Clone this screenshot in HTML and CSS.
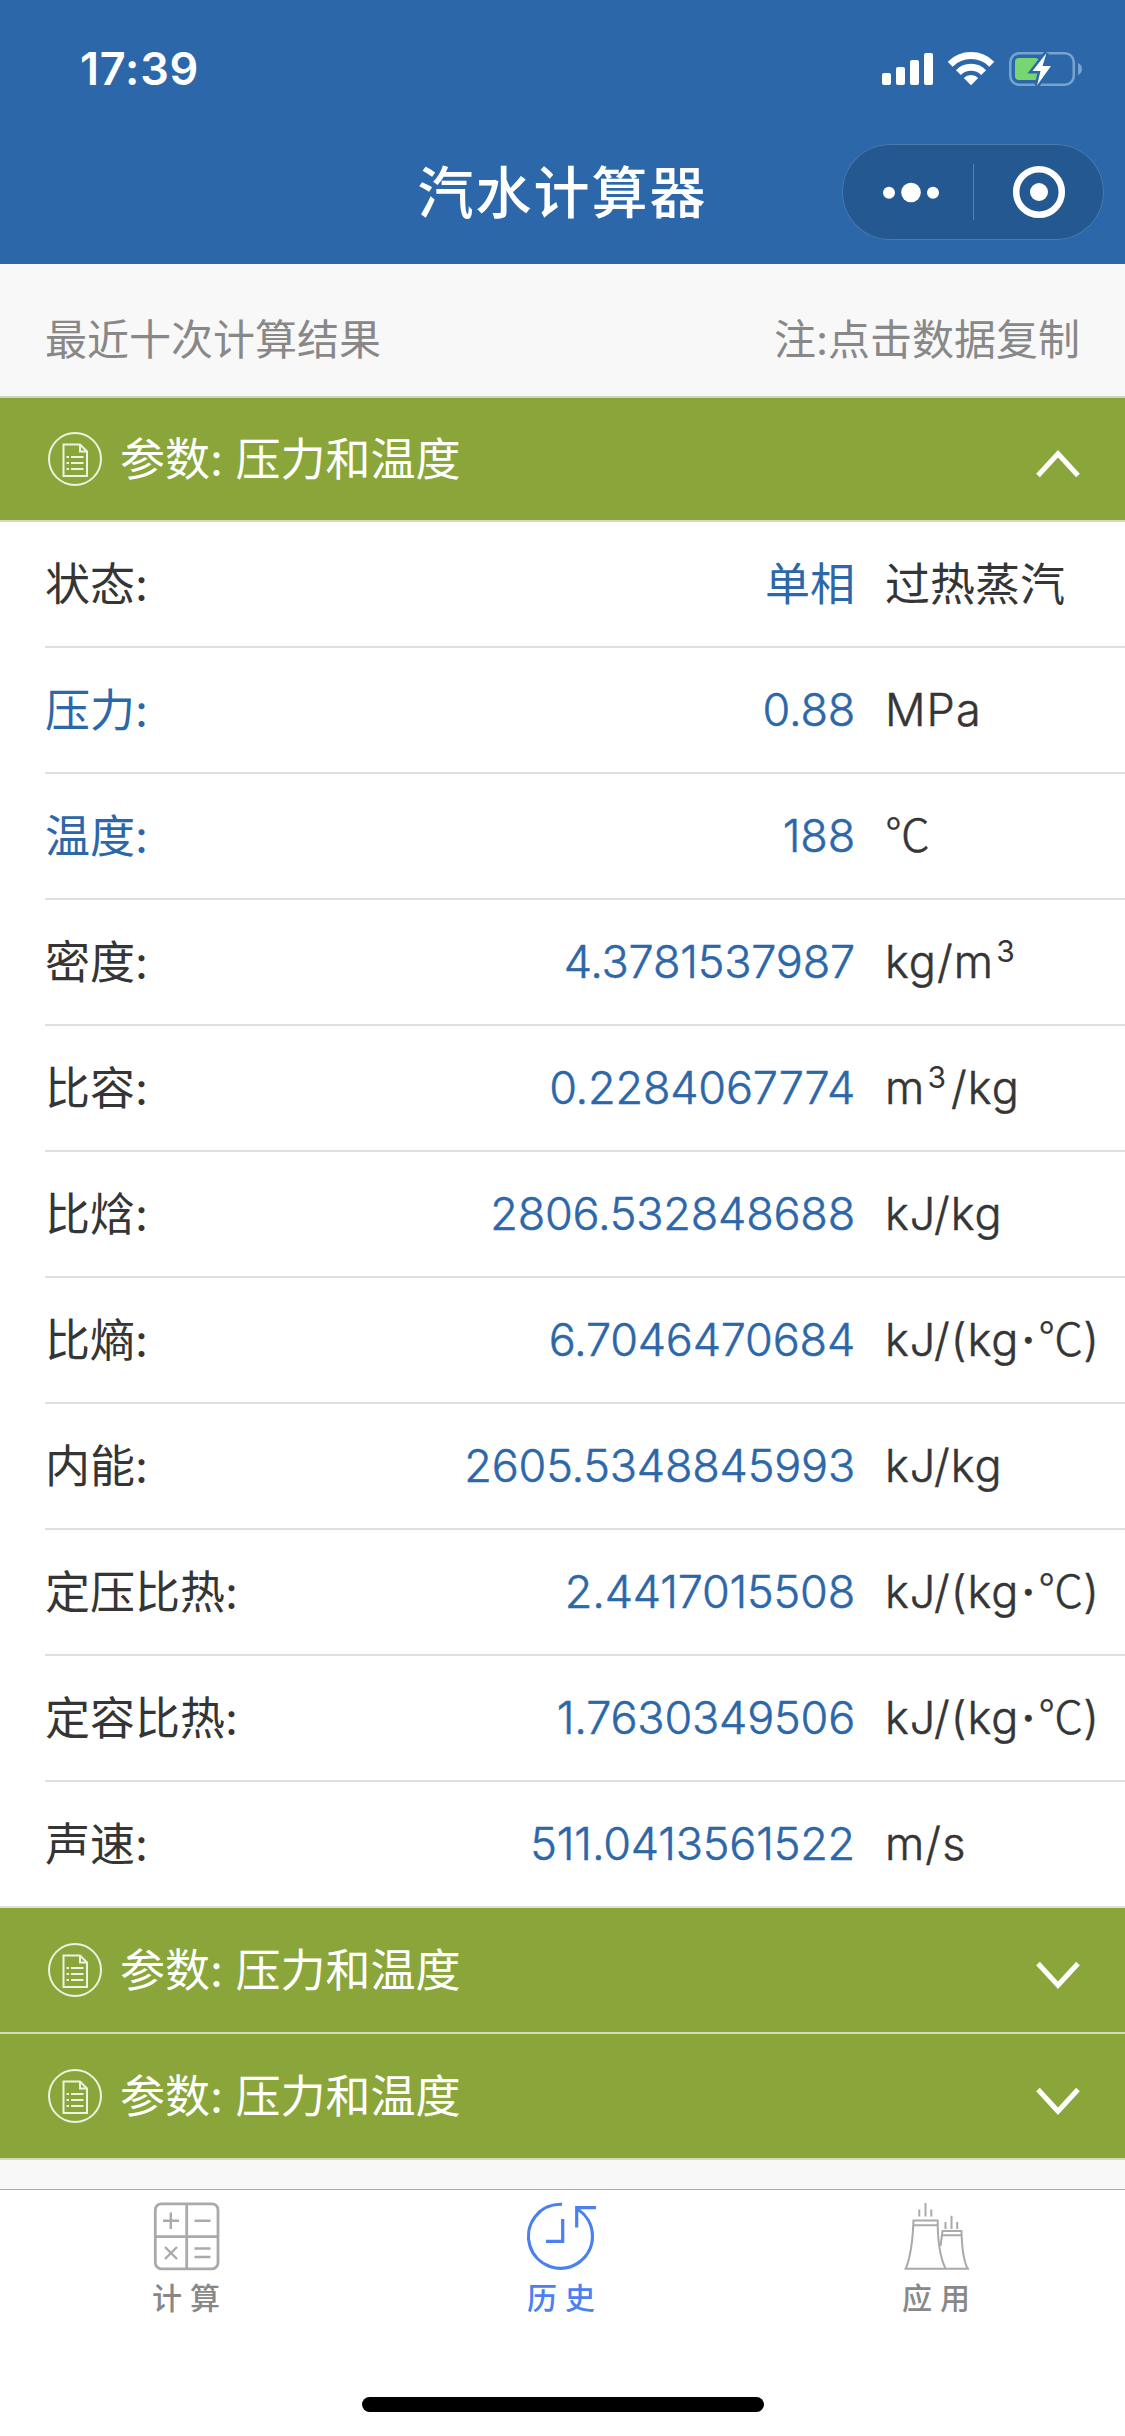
FILE: index.html
```html
<!DOCTYPE html>
<html lang="zh-CN">
<head>
    <meta charset="UTF-8">
    <meta name="viewport" content="width=device-width, initial-scale=1.0">
    <title>汽水计算器</title>
    <link rel="stylesheet" href="styles.css">
</head>
<body>
    <!-- shared icons -->
    <svg class="defs" width="0" height="0">
        <symbol id="doc" viewBox="48 1943 54 54">
            <circle cx="75" cy="1970" r="26" />
            <path d="M63.5 1955.500H80l7 7V1987H63.500Z M80 1955.500V1962.500H87" />
            <path d="M66.500 1968h2.500M66.500 1974h2.500M66.500 1980h2.500M71 1968h12.500M71 1974h12.500M71 1980h12.500" />
        </symbol>
        <symbol id="up" viewBox="0 0 44 28">
            <path d="M2 25.500L22 3.700L42 25.500" />
        </symbol>
        <symbol id="down" viewBox="0 0 44 28">
            <path d="M2 2.500L22 24.300L42 2.500" />
        </symbol>
    </svg>

    <header>
        <div class="status-bar">
            <span class="time">17:39</span>
            <svg class="status-icons" width="205" height="40" viewBox="880 50 205 40">
                <g fill="#fff">
                    <rect x="882" y="73" width="9" height="12" rx="2" />
                    <rect x="896" y="67" width="9" height="18" rx="2" />
                    <rect x="910" y="60" width="9" height="25" rx="2" />
                    <rect x="924" y="53" width="9" height="32" rx="2" />
                    <path d="M971 85.300L963.800 78A10 10 0 0 1 978.200 78Z" />
                </g>
                <path d="M950.200 64.200A29.500 29.500 0 0 1 991.800 64.200M958.400 72.600A17.800 17.800 0 0 1 983.600 72.600" fill="none" stroke="#fff" stroke-width="7" />
                <rect x="1010.300" y="53.300" width="63.500" height="31.500" rx="9" fill="none" stroke="#78a3cd" stroke-width="2.600" />
                <path d="M1078 63v12q4-1.500 4-6t-4-6Z" fill="#78a3cd" />
                <rect x="1015" y="58" width="24" height="22" rx="4" fill="#78d672" />
                <path d="M1046.500 53L1032.500 71H1040.500L1037 85.500L1051 66H1042.500Z" fill="#fff" stroke="#2c67aa" stroke-width="5" paint-order="stroke" />
            </svg>
        </div>
        <div class="nav-bar">
            <h1>汽水计算器</h1>
            <div class="capsule">
                <svg width="262" height="96" viewBox="842 144 262 96">
                    <g fill="#fff">
                        <circle cx="889" cy="192.800" r="6" />
                        <circle cx="911" cy="192.500" r="9.800" />
                        <circle cx="933" cy="192.800" r="6" />
                        <circle cx="1039" cy="192" r="9" />
                    </g>
                    <path d="M973.500 164V220" stroke="#5382b1" />
                    <circle cx="1039" cy="192" r="22.800" fill="none" stroke="#fff" stroke-width="6.500" />
                </svg>
            </div>
        </div>
    </header>

    <main>
        <div class="tips">
            <span>最近十次计算结果</span>
            <span>注:点击数据复制</span>
        </div>

        <div class="list">
            <div class="head open">
                <svg class="doc"><use href="#doc" /></svg>
                <span>参数: 压力和温度</span>
                <svg class="arrow"><use href="#up" /></svg>
            </div>
            <div class="rows">
                <div class="row"><span class="label">状态:</span><span class="value text">单相</span><span class="unit text">过热蒸汽</span></div>
                <div class="row"><span class="label input">压力:</span><span class="value">0.88</span><span class="unit">MPa</span></div>
                <div class="row"><span class="label input">温度:</span><span class="value">188</span><span class="unit"><i class="deg">℃</i></span></div>
                <div class="row"><span class="label">密度:</span><span class="value">4.3781537987</span><span class="unit">kg/m<sup>3</sup></span></div>
                <div class="row"><span class="label">比容:</span><span class="value">0.2284067774</span><span class="unit">m<sup>3</sup>/kg</span></div>
                <div class="row"><span class="label">比焓:</span><span class="value">2806.532848688</span><span class="unit">kJ/kg</span></div>
                <div class="row"><span class="label">比熵:</span><span class="value">6.7046470684</span><span class="unit">kJ/(kg<i class="dot">·</i><i class="deg">℃</i>)</span></div>
                <div class="row"><span class="label">内能:</span><span class="value">2605.5348845993</span><span class="unit">kJ/kg</span></div>
                <div class="row"><span class="label">定压比热:</span><span class="value">2.4417015508</span><span class="unit">kJ/(kg<i class="dot">·</i><i class="deg">℃</i>)</span></div>
                <div class="row"><span class="label">定容比热:</span><span class="value">1.7630349506</span><span class="unit">kJ/(kg<i class="dot">·</i><i class="deg">℃</i>)</span></div>
                <div class="row"><span class="label">声速:</span><span class="value">511.0413561522</span><span class="unit">m/s</span></div>
            </div>
            <div class="head">
                <svg class="doc"><use href="#doc" /></svg>
                <span>参数: 压力和温度</span>
                <svg class="arrow"><use href="#down" /></svg>
            </div>
            <div class="head">
                <svg class="doc"><use href="#doc" /></svg>
                <span>参数: 压力和温度</span>
                <svg class="arrow"><use href="#down" /></svg>
            </div>
        </div>
    </main>

    <footer>
        <nav>
            <a class="tab">
                <svg width="72" height="72" viewBox="151 2200 72 72">
                    <g fill="none" stroke="#aaa" stroke-width="2.800">
                        <rect x="155.300" y="2203.800" width="62.700" height="65" rx="6" />
                        <path d="M186.700 2204V2269M155 2236.700H218" />
                        <path d="M163 2220.700H179M170.800 2212.500V2229M194.500 2220.700H210.500M165 2247L177 2259M177 2247L165 2259M194.500 2248.500H210.500M194.500 2257H210.500" stroke-width="2.400" />
                    </g>
                </svg>
                <span>计 算</span>
            </a>
            <a class="tab active">
                <svg width="72" height="72" viewBox="525 2200 72 72">
                    <path d="M561 2204.300A32 32 0 1 0 577 2209.500M575.700 2227.500V2207.700H595M561.700 2219V2241.300H545" fill="none" stroke="#4a80f0" stroke-width="3.200" />
                </svg>
                <span>历 史</span>
            </a>
            <a class="tab">
                <svg width="72" height="72" viewBox="901 2200 72 72">
                    <g fill="none" stroke="#aaa" stroke-width="2">
                        <path d="M904.500 2268.800H969M906 2268.500Q912.500 2251 913.500 2220.500H937.700Q937.500 2252 945.500 2268.500M913.500 2225.300H937.700" />
                        <path d="M940.500 2246L942.500 2231H961.500Q962 2257 967.500 2268.500M942.500 2235.300H961.500" />
                        <path d="M919.300 2209.500V2216.500M925.500 2203V2216.500M931.300 2209.500V2216.500M945.500 2222V2229M951.500 2215.700V2229M957.200 2222V2229" />
                    </g>
                </svg>
                <span>应 用</span>
            </a>
        </nav>
        <div class="home-indicator"></div>
    </footer>
</body>
</html>
```
FILE: styles.css
```css
* {
    box-sizing: border-box;
}
body {
    margin: 0;
    width: 1125px;
    height: 2436px;
    display: flex;
    flex-direction: column;
    background: #f8f8f8;
    color: #353535;
    font-family: Inter, "Noto Sans CJK SC", sans-serif;
    font-size: 45px;
    line-height: 1.2;
    overflow: hidden;
}
svg {
    display: block;
    flex: none;
}
.defs {
    position: absolute;
}
header {
    height: 264px;
    background: #2c67aa;
    color: #fff;
}
.status-bar {
    height: 144px;
    padding: 42px 40px 0 80px;
    display: flex;
    justify-content: space-between;
    align-items: flex-start;
}
.time {
    font-weight: 600;
    letter-spacing: 0.8px;
    line-height: 54px;
}
.status-icons {
    margin-top: 8px;
}
.nav-bar {
    height: 96px;
    padding: 0 21px;
    display: grid;
    grid-template-columns: 1fr 290px 1fr;
    align-items: center;
}
h1 {
    grid-column: 2;
    margin: 0;
    padding-top: 2px;
    font-size: 56px;
    font-weight: 500;
    letter-spacing: 2px;
    line-height: 94px;
    text-align: center;
    white-space: nowrap;
}
.capsule {
    justify-self: end;
    width: 262px;
    height: 96px;
    border-radius: 48px;
    background: #245891;
    box-shadow: inset 0 0 0 1px #4a7bac;
}
main {
    flex: 1;
}
.tips {
    height: 132px;
    padding: 20px 45px 0;
    display: flex;
    justify-content: space-between;
    align-items: center;
    color: #888;
    font-size: 42px;
}
.list {
    border-top: 2px solid #cfd3c0;
}
.head {
    height: 126px;
    padding: 0 45px 0 48px;
    display: flex;
    align-items: center;
    background: #8aa63a;
    border-bottom: 2px solid #d3dab9;
    color: #fff;
}
.head span {
    padding-top: 1px;
}
.head.open {
    height: 124px;
}
.doc {
    width: 54px;
    height: 54px;
    margin-right: 18px;
    fill: none;
    stroke: #fff;
    stroke-opacity: 0.85;
    stroke-width: 2;
}
.arrow {
    width: 44px;
    height: 28px;
    margin: 9px 0 0 auto;
    fill: none;
    stroke: #fff;
    stroke-width: 5;
}
.rows {
    background: #fff;
}
.row {
    height: 126px;
    margin-left: 45px;
    display: grid;
    grid-template-columns: 240px 570px 1fr;
    align-items: center;
    border-bottom: 2px solid #dfdfdf;
    white-space: nowrap;
}
.row:last-child {
    margin-left: 0;
    padding-left: 45px;
}
.label {
    padding-top: 2px;
}
.value {
    text-align: right;
    color: #2c67aa;
    font-weight: 300;
    letter-spacing: -0.2px;
    -webkit-text-stroke: 0.5px;
}
.input {
    color: #2c67aa;
}
.unit {
    padding-left: 30px;
    font-weight: 300;
    letter-spacing: 1.1px;
    -webkit-text-stroke: 0.5px;
}
.row .text {
    padding-top: 2px;
    font-weight: 400;
    letter-spacing: 0;
    -webkit-text-stroke: 0;
}
.unit i {
    font-style: normal;
}
.dot {
    font-weight: 500;
    margin: 0 2px;
}
.deg {
    font-family: "Noto Sans CJK SC", sans-serif;
    line-height: 0;
    letter-spacing: 0;
}
sup {
    font-size: 30px;
    font-weight: 400;
    line-height: 0;
    margin: 0 4px 0 2px;
    vertical-align: 16px;
    -webkit-text-stroke: 0;
}
footer {
    height: 247px;
    background: #fff;
    border-top: 1px solid #aaa;
    display: flex;
    flex-direction: column;
    align-items: center;
    justify-content: space-between;
}
nav {
    width: 100%;
    display: flex;
    padding-top: 10px;
}
.tab {
    flex: 1;
    padding-right: 3px;
    display: flex;
    flex-direction: column;
    align-items: center;
    color: #888;
    font-size: 30px;
    font-weight: 500;
    line-height: 52px;
}
.tab svg {
    margin-left: 2px;
}
.tab.active {
    color: #4a80f0;
}
.home-indicator {
    width: 402px;
    height: 15px;
    margin-bottom: 24px;
    border-radius: 8px;
    background: #000;
}
```
